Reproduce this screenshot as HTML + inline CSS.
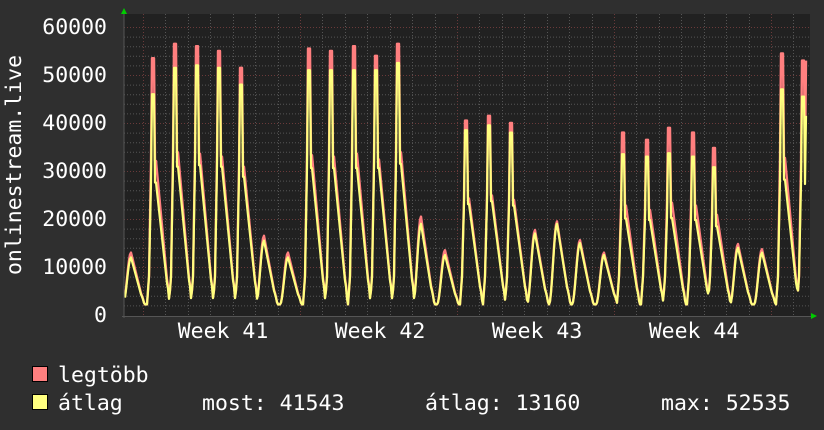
<!DOCTYPE html>
<html><head><meta charset="utf-8"><style>
html,body{margin:0;padding:0;background:#2f2f2f;width:824px;height:430px;overflow:hidden}
svg{display:block}
text{font-family:"DejaVu Sans Mono","Liberation Mono",monospace;font-size:21.5px;fill:#fff}
</style></head><body>
<svg id="g" width="824" height="430" xmlns="http://www.w3.org/2000/svg">
<rect width="824" height="430" fill="#2f2f2f"/>
<rect x="124" y="14" width="686" height="302" fill="#212121"/>
<g id="grid"></g>
<path id="mx" fill="none" stroke="#ff7f7f" stroke-width="2.4" stroke-linejoin="round"/>
<path id="av" fill="none" stroke="#ffff7f" stroke-width="2.2" stroke-linejoin="round"/>
<line x1="124" y1="12" x2="124" y2="318" stroke="#555" stroke-width="1"/>
<line x1="122" y1="316.5" x2="812" y2="316.5" stroke="#555" stroke-width="1"/>
<polygon points="121,14 127,14 124,8" fill="#00cc00"/>
<polygon points="811,313 811,319 817,316" fill="#00cc00"/>
<g text-anchor="end">
<text x="107" y="34">60000</text>
<text x="107" y="82">50000</text>
<text x="107" y="130">40000</text>
<text x="107" y="178">30000</text>
<text x="107" y="226">20000</text>
<text x="107" y="274">10000</text>
<text x="107" y="322">0</text>
</g>
<g text-anchor="middle">
<text x="223" y="338">Week 41</text>
<text x="380" y="338">Week 42</text>
<text x="537" y="338">Week 43</text>
<text x="694" y="338">Week 44</text>
</g>
<text transform="translate(21,165) rotate(-90)" text-anchor="middle">onlinestream.live</text>
<rect x="32.5" y="366.5" width="15" height="15" fill="#ff7f7f" stroke="#000"/>
<rect x="32.5" y="394.5" width="15" height="15" fill="#ffff7f" stroke="#000"/>
<text x="58" y="382">legtöbb</text>
<text x="58" y="410">átlag</text>
<text x="202" y="410">most: 41543</text>
<text x="425" y="410">átlag: 13160</text>
<text x="661" y="410">max: 52535</text>
</svg>
<script>
var g=document.getElementById('grid'),h='';
for(var v=2000;v<=60000;v+=2000){var y=315-v*0.0048;var maj=v%10000==0;
h+='<line x1="124" x2="810" y1="'+(y+.5)+'" y2="'+(y+.5)+'" stroke="'+(maj?'#6a3a3a':'#555')+'" stroke-dasharray="1,2"/>';}
for(var x=143;x<810;x+=22.43){var dx=Math.round(x)+.5;var k=Math.round((x-143)/22.43);var maj=k%7==0;
h+='<line y1="14" y2="316" x1="'+dx+'" x2="'+dx+'" stroke="'+(maj?'#6a3a3a':'#555')+'" stroke-dasharray="1,2"/>';}
g.innerHTML=h;
var P=[[131,13,12],[153,53.5,46],[175,56.5,51.5],[197,56,52],[219,55,51.5],[241,51.5,48],[264,16.5,15.5],[288,13,12],[309,55.5,51],[331,55,51],[354,56,51],[376,54,51],[398,56.5,52.5],[421,20.5,19],[445,13.5,12.5],[466,40.5,38.5],[489,41.5,39.5],[511,40,38],[535,17.7,17],[557,19.5,19],[580,15.6,15],[604,13,12.5],[623,38,33.5],[647,36.5,33],[669,39,33.7],[693,38,33],[714,34.8,30.8],[738,14.8,14],[762,13.7,13],[782,54.5,47],[803,53,45.5]];
function ease(t){return (1-Math.cos(Math.PI*t))/2;}
var MIN=2.2;
function val(x,j){var best=MIN;for(var i=0;i<P.length;i++){var p=P[i][0],pk=P[i][j],d=x-p,v=MIN;
if(pk>25){var sh=pk*0.6;
 if(d<-6||d>17)continue;
 if(d<=-4)v=MIN+(8-MIN)*ease((d+6)/2);
 else if(d<=-2)v=8+(sh-8)*(d+4)/2;
 else if(d<=1)v=pk;
 else if(d<=3)v=sh;
 else {var t=(d-3)/14;v=MIN+(sh-MIN)*(t<0.8?1-t*1.05:0.16*ease(1-(t-0.8)/0.2));}}
else{if(d<-8||d>14)continue;
 if(d<=0)v=MIN+(pk-MIN)*ease((d+8)/8);else {var t=d/14;v=MIN+(pk-MIN)*(t<0.75?1-t*1.1:0.175*ease(1-(t-0.75)/0.25));}}
if(v>best)best=v;}return best;}
function path(j){var s='';for(var x=125;x<=806;x++){var v=val(x,j);if(x==806)v=j==1?53:41.5;s+=(x==125?'M':'L')+x+','+(315-v*4.8).toFixed(1);}return s;}
document.getElementById('mx').setAttribute('d',path(1));
document.getElementById('av').setAttribute('d',path(2));
</script>
</body></html>
